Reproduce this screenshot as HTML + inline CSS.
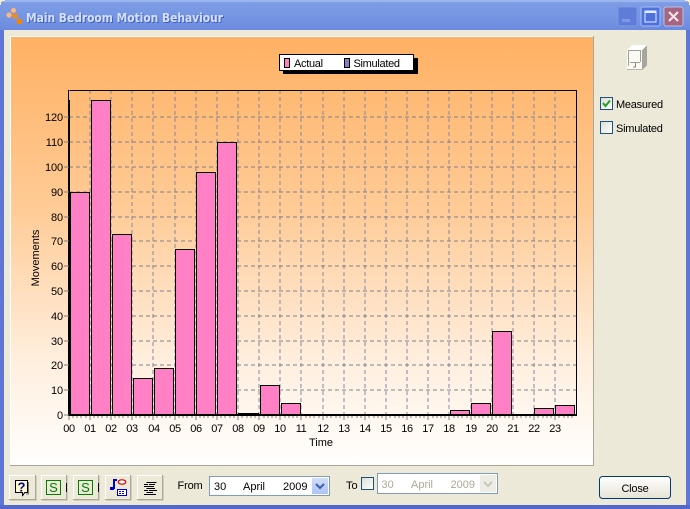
<!DOCTYPE html>
<html><head><meta charset="utf-8"><style>
html,body{margin:0;padding:0;background:#ece9d8}
#w{position:relative;width:690px;height:509px;overflow:hidden;font-family:"Liberation Sans",sans-serif;background:#ece9d8}
svg{position:absolute;left:0;top:0}
</style></head><body><div id="w">
<svg width="690" height="509" viewBox="0 0 690 509" font-family="Liberation Sans, sans-serif" font-size="11" shape-rendering="crispEdges">
<defs>
<linearGradient id="tb" x1="0" y1="0" x2="0" y2="1"><stop offset="0" stop-color="#8aa8ea"/><stop offset=".12" stop-color="#7d9be4"/><stop offset=".6" stop-color="#7595e2"/><stop offset="1" stop-color="#6c8ade"/></linearGradient>
<linearGradient id="bg" x1="0" y1="0" x2="0" y2="1"><stop offset="0" stop-color="#ffb163"/><stop offset=".4" stop-color="#ffcb96"/><stop offset=".75" stop-color="#ffeedd"/><stop offset=".93" stop-color="#fffaf5"/><stop offset="1" stop-color="#fffefd"/></linearGradient>
<linearGradient id="cb" x1="0" y1="0" x2="1" y2="1"><stop offset="0" stop-color="#dcdcd6"/><stop offset="1" stop-color="#fff"/></linearGradient>
<linearGradient id="cl" x1="0" y1="0" x2="0" y2="1"><stop offset="0" stop-color="#fff"/><stop offset="1" stop-color="#e6e3d6"/></linearGradient>
<linearGradient id="dd" x1="0" y1="0" x2="0" y2="1"><stop offset="0" stop-color="#d2def9"/><stop offset="1" stop-color="#adc3f4"/></linearGradient>
</defs>

<!-- window frame -->
<rect width="690" height="509" fill="#5f76d6"/>
<rect width="690" height="30" fill="url(#tb)"/>
<rect x="4" y="30" width="682" height="475" fill="#ece9d8"/>
<rect x="0" y="505" width="690" height="4" fill="#5268cc"/>
<rect x="0" y="0" width="690" height="2" fill="#9ab4ef"/>
<path d="M0 0H5V1H2V2H1V5H0ZM690 0H685V1H688V2H689V5H690Z" fill="#f3efc8"/>

<!-- title icon -->
<g shape-rendering="auto">
<circle cx="9" cy="15" r="2.6" fill="#ffb878"/><circle cx="13.5" cy="10.5" r="2.5" fill="#ffb878"/>
<rect x="12.5" y="13.5" width="5" height="5" fill="#f08a1e"/><rect x="17" y="19" width="5" height="5" fill="#f58300"/>
<text x="26" y="22" font-family="DejaVu Sans, sans-serif" font-size="12" font-weight="bold" fill="#4660b8" transform="translate(1 1)" textLength="197" lengthAdjust="spacingAndGlyphs">Main Bedroom Motion Behaviour</text>
<text x="26" y="22" font-family="DejaVu Sans, sans-serif" font-size="12" font-weight="bold" fill="#d3e0ff" textLength="197" lengthAdjust="spacingAndGlyphs">Main Bedroom Motion Behaviour</text>
</g>

<!-- caption buttons -->
<rect x="618" y="7" width="19" height="19" rx="2" fill="#5f7dd8" stroke="#7e97e4"/>
<rect x="622" y="19" width="8" height="3" fill="#7f98e4"/>
<rect x="641" y="7" width="19" height="19" rx="2" fill="#4d72de" stroke="#a9bff2"/>
<rect x="645" y="11" width="11" height="11" fill="none" stroke="#e6edff"/><rect x="645" y="11" width="11" height="2" fill="#e6edff"/>
<rect x="664" y="7" width="19" height="19" rx="2" fill="#a8657f" stroke="#b9bfe6"/>
<path d="M669 12L678 21M678 12L669 21" stroke="#f0e6ea" stroke-width="2.2" shape-rendering="auto"/>

<!-- chart panel -->
<rect x="10" y="36" width="584" height="430" fill="#a9a79a"/>
<rect x="10" y="36" width="583" height="429" fill="#fff"/>
<rect x="11" y="37" width="582" height="428" fill="url(#bg)"/>

<!-- grid -->
<path d="M90 90V415M111 90V415M132 90V415M153 90V415M175 90V415M196 90V415M217 90V415M238 90V415M259 90V415M280 90V415M301 90V415M323 90V415M344 90V415M365 90V415M386 90V415M407 90V415M428 90V415M449 90V415M471 90V415M492 90V415M513 90V415M534 90V415M555 90V415" stroke="#8488a0" stroke-dasharray="4 3" fill="none"/>
<path d="M69 117H577M69 142H577M69 167H577M69 192H577M69 217H577M69 241H577M69 266H577M69 291H577M69 316H577M69 341H577M69 365H577M69 390H577" stroke="#80808a" stroke-dasharray="4 3" fill="none"/>

<!-- plot frame -->
<path d="M69.5 90.5H576.5V415" fill="none" stroke="#000"/>
<rect x="68" y="100" width="2" height="315" fill="#000"/>
<rect x="68" y="90" width="1" height="10" fill="#000"/>

<!-- bars -->
<g fill="#ff80c4" stroke="#000" stroke-width="1">
<rect x="70.5" y="192.5" width="19" height="222"/>
<rect x="91.5" y="100.5" width="19" height="314"/>
<rect x="112.5" y="234.5" width="19" height="180"/>
<rect x="133.5" y="378.5" width="19" height="36"/>
<rect x="154.5" y="368.5" width="19" height="46"/>
<rect x="175.5" y="249.5" width="19" height="165"/>
<rect x="196.5" y="172.5" width="19" height="242"/>
<rect x="217.5" y="142.5" width="19" height="272"/>
<rect x="238.5" y="413.5" width="20" height="1"/>
<rect x="260.5" y="385.5" width="19" height="29"/>
<rect x="281.5" y="403.5" width="19" height="11"/>
<rect x="450.5" y="410.5" width="19" height="4"/>
<rect x="471.5" y="403.5" width="19" height="11"/>
<rect x="492.5" y="331.5" width="19" height="83"/>
<rect x="534.5" y="408.5" width="19" height="6"/>
<rect x="555.5" y="405.5" width="19" height="9"/>
</g>
<rect x="68" y="414" width="509" height="2" fill="#000"/>

<!-- ticks -->
<path d="M64 117H69M64 142H69M64 167H69M64 192H69M64 217H69M64 241H69M64 266H69M64 291H69M64 316H69M64 341H69M64 365H69M64 390H69M64 415H69" stroke="#7f7f7f" fill="none"/>
<path d="M69 416V420M90 416V420M111 416V420M132 416V420M153 416V420M175 416V420M196 416V420M217 416V420M238 416V420M259 416V420M280 416V420M301 416V420M323 416V420M344 416V420M365 416V420M386 416V420M407 416V420M428 416V420M449 416V420M471 416V420M492 416V420M513 416V420M534 416V420M555 416V420" stroke="#7f7f7f" fill="none"/>
<path d="M73 416V418M77 416V418M81 416V418M86 416V418M94 416V418M98 416V418M102 416V418M107 416V418M115 416V418M119 416V418M123 416V418M128 416V418M136 416V418M140 416V418M145 416V418M149 416V418M157 416V418M162 416V418M166 416V418M170 416V418M179 416V418M183 416V418M187 416V418M192 416V418M200 416V418M204 416V418M208 416V418M213 416V418M221 416V418M225 416V418M230 416V418M234 416V418M242 416V418M247 416V418M251 416V418M255 416V418M264 416V418M268 416V418M272 416V418M276 416V418M285 416V418M289 416V418M293 416V418M297 416V418M306 416V418M310 416V418M314 416V418M319 416V418M327 416V418M331 416V418M336 416V418M340 416V418M348 416V418M352 416V418M357 416V418M361 416V418M369 416V418M374 416V418M378 416V418M382 416V418M390 416V418M395 416V418M399 416V418M403 416V418M411 416V418M416 416V418M420 416V418M424 416V418M433 416V418M437 416V418M441 416V418M445 416V418M454 416V418M458 416V418M462 416V418M467 416V418M475 416V418M479 416V418M483 416V418M488 416V418M496 416V418M500 416V418M505 416V418M509 416V418M517 416V418M521 416V418M526 416V418M530 416V418M538 416V418M543 416V418M547 416V418M551 416V418M559 416V418M564 416V418M568 416V418M572 416V418" stroke="#7f7f7f" fill="none"/>

<!-- axis labels -->
<g shape-rendering="auto" fill="#000">
<g text-anchor="end" letter-spacing="-.1">
<text x="63" y="121">120</text><text x="63" y="146">110</text><text x="63" y="171">100</text><text x="63" y="196">90</text><text x="63" y="221">80</text><text x="63" y="245">70</text><text x="63" y="270">60</text><text x="63" y="295">50</text><text x="63" y="320">40</text><text x="63" y="345">30</text><text x="63" y="369">20</text><text x="63" y="394">10</text><text x="63" y="419">0</text>
</g>
<g text-anchor="middle">
<g letter-spacing="-.4">
<text x="69" y="432">00</text><text x="90" y="432">01</text><text x="111" y="432">02</text><text x="132" y="432">03</text><text x="154" y="432">04</text><text x="175" y="432">05</text><text x="196" y="432">06</text><text x="217" y="432">07</text><text x="238" y="432">08</text><text x="259" y="432">09</text><text x="280" y="432">10</text><text x="301" y="432">11</text><text x="323" y="432">12</text><text x="344" y="432">13</text><text x="365" y="432">14</text><text x="386" y="432">15</text><text x="407" y="432">16</text><text x="428" y="432">17</text><text x="449" y="432">18</text><text x="471" y="432">19</text><text x="492" y="432">20</text><text x="513" y="432">21</text><text x="534" y="432">22</text><text x="555" y="432">23</text>
</g>
<text x="321" y="446">Time</text>
<text transform="translate(39 258) rotate(-90)">Movements</text>
</g>
</g>

<!-- legend -->
<rect x="283" y="58" width="135" height="16" fill="#000"/>
<rect x="279.5" y="54.5" width="134" height="16" fill="#fff" stroke="#000"/>
<rect x="284.5" y="58.5" width="5" height="9" fill="#ff80c4" stroke="#000"/>
<rect x="344.5" y="58.5" width="5" height="9" fill="#8080c0" stroke="#000"/>
<g shape-rendering="auto" letter-spacing="-.3"><text x="294" y="67">Actual</text><text x="353.500" y="67">Simulated</text></g>

<!-- right panel: door icon -->
<path d="M627 50L632 45H647L642 50Z" fill="#fff"/>
<path d="M642 50L647 45V65L642 70Z" fill="#a8a69c"/>
<rect x="627" y="50" width="15" height="20" fill="#fbfaf5"/>
<rect x="627" y="69" width="15" height="1" fill="#b8b6aa"/>
<path d="M628.500 50V66M628.500 50.500H640.500V62" fill="none" stroke="#a09e94"/>
<path d="M629 50.500H640M630 62.500H640" fill="none" stroke="#a09e94"/>
<path d="M635.500 63V67H633" fill="none" stroke="#8a887e"/>

<!-- checkboxes -->
<rect x="600.5" y="97.5" width="12" height="12" fill="url(#cb)" stroke="#1c5180"/>
<path d="M603 103L605.5 106L610 100.5" fill="none" stroke="#21a121" stroke-width="2" shape-rendering="auto"/>
<rect x="600.5" y="121.5" width="12" height="12" fill="url(#cb)" stroke="#1c5180"/>
<g shape-rendering="auto" letter-spacing="-.25"><text x="616" y="108">Measured</text><text x="616" y="132">Simulated</text></g>

<!-- toolbar buttons -->
<path d="M9.5 499V475.5H35M41.5 499V475.5H66M73.5 499V475.5H98M105.5 499V475.5H130M137.5 499V475.5H162" fill="none" stroke="#fff"/>
<path d="M35.5 475V499.5H9M66.5 475V499.5H41M98.5 475V499.5H73M130.5 475V499.5H105M162.5 475V499.5H137" fill="none" stroke="#aca899"/>
<path d="M36.5 476V500.5H10M67.5 476V500.5H42M99.5 476V500.5H74M131.5 476V500.5H106M163.5 476V500.5H138" fill="none" stroke="#d2cfc0"/>

<!-- help icon -->
<path d="M15.5 480.5H27.5V492.5H25L22.500 495.500V492.500H15.500Z" fill="#fff8c8" stroke="#000"/>
<path d="M28.500 482V494H26" fill="none" stroke="#777"/>
<text x="21.500" y="491.500" font-size="13" font-weight="bold" fill="#0000a0" text-anchor="middle" shape-rendering="auto">?</text>
<!-- S icons -->
<rect x="46.5" y="480.5" width="14" height="14" fill="none" stroke="#008000"/>
<text x="53.500" y="492" font-size="13" fill="#008000" text-anchor="middle" shape-rendering="auto">S</text>
<rect x="66" y="483" width="1" height="9" fill="#000"/>
<rect x="78.5" y="480.5" width="14" height="14" fill="none" stroke="#008000"/>
<text x="85.500" y="492" font-size="13" fill="#008000" text-anchor="middle" shape-rendering="auto">S</text>
<rect x="98" y="483" width="1" height="9" fill="#000"/>
<!-- note + lips + calendar -->
<rect x="113" y="479" width="2" height="10" fill="#0000d0"/>
<rect x="115" y="479" width="2" height="2" fill="#0000d0"/>
<rect x="110" y="487" width="4" height="3" fill="#0000d0"/>
<ellipse cx="122" cy="482" rx="3.800" ry="2.200" fill="#fff" stroke="#e00000" stroke-width="1.200" shape-rendering="auto"/>
<rect x="117.5" y="489.5" width="9" height="6" fill="#fff" stroke="#0000c0"/>
<path d="M119 491.500H125M119 493.500H125" stroke="#0000c0" stroke-dasharray="2 1"/>
<!-- list icon -->
<path d="M146.500 482.500H156.500M144 484.500H148M149 484.500H155M144 486.500H154M146.500 488.500H155M144 490.500H148M149 490.500H157M146.500 492.500H153M144 494.500H156" stroke="#000" fill="none"/>

<!-- from -->
<g shape-rendering="auto" letter-spacing="-.15"><text x="177.500" y="489">From</text></g>
<rect x="209.5" y="476.5" width="120" height="19" fill="#fff" stroke="#7f9db9"/>
<g shape-rendering="auto"><text x="214" y="490">30</text><text x="243" y="490">April</text><text x="283" y="490">2009</text></g>
<rect x="312" y="478" width="16" height="16" rx="1" fill="url(#dd)"/>
<path d="M316 484L320 488L324 484" fill="none" stroke="#3a5fa8" stroke-width="2" shape-rendering="auto"/>

<!-- to -->
<g shape-rendering="auto"><text x="346" y="489">To</text></g>
<rect x="361.5" y="477.5" width="12" height="12" fill="url(#cb)" stroke="#1c5180"/>
<rect x="377.5" y="473.5" width="120" height="20" fill="#fff" stroke="#7f9db9"/>
<g shape-rendering="auto" fill="#aca899"><text x="381.500" y="488">30</text><text x="411" y="488">April</text><text x="450.500" y="488">2009</text></g>
<rect x="480" y="475" width="16" height="17" rx="1" fill="#eeede5"/>
<path d="M484 482L488 486L492 482" fill="none" stroke="#c9c7ba" stroke-width="2" shape-rendering="auto"/>

<!-- close -->
<rect x="599.5" y="476.5" width="71" height="22" rx="3" fill="url(#cl)" stroke="#003c74" shape-rendering="auto"/>
<text x="635" y="492" text-anchor="middle" fill="#000" letter-spacing="-.2" shape-rendering="auto">Close</text>
</svg>
</div></body></html>
